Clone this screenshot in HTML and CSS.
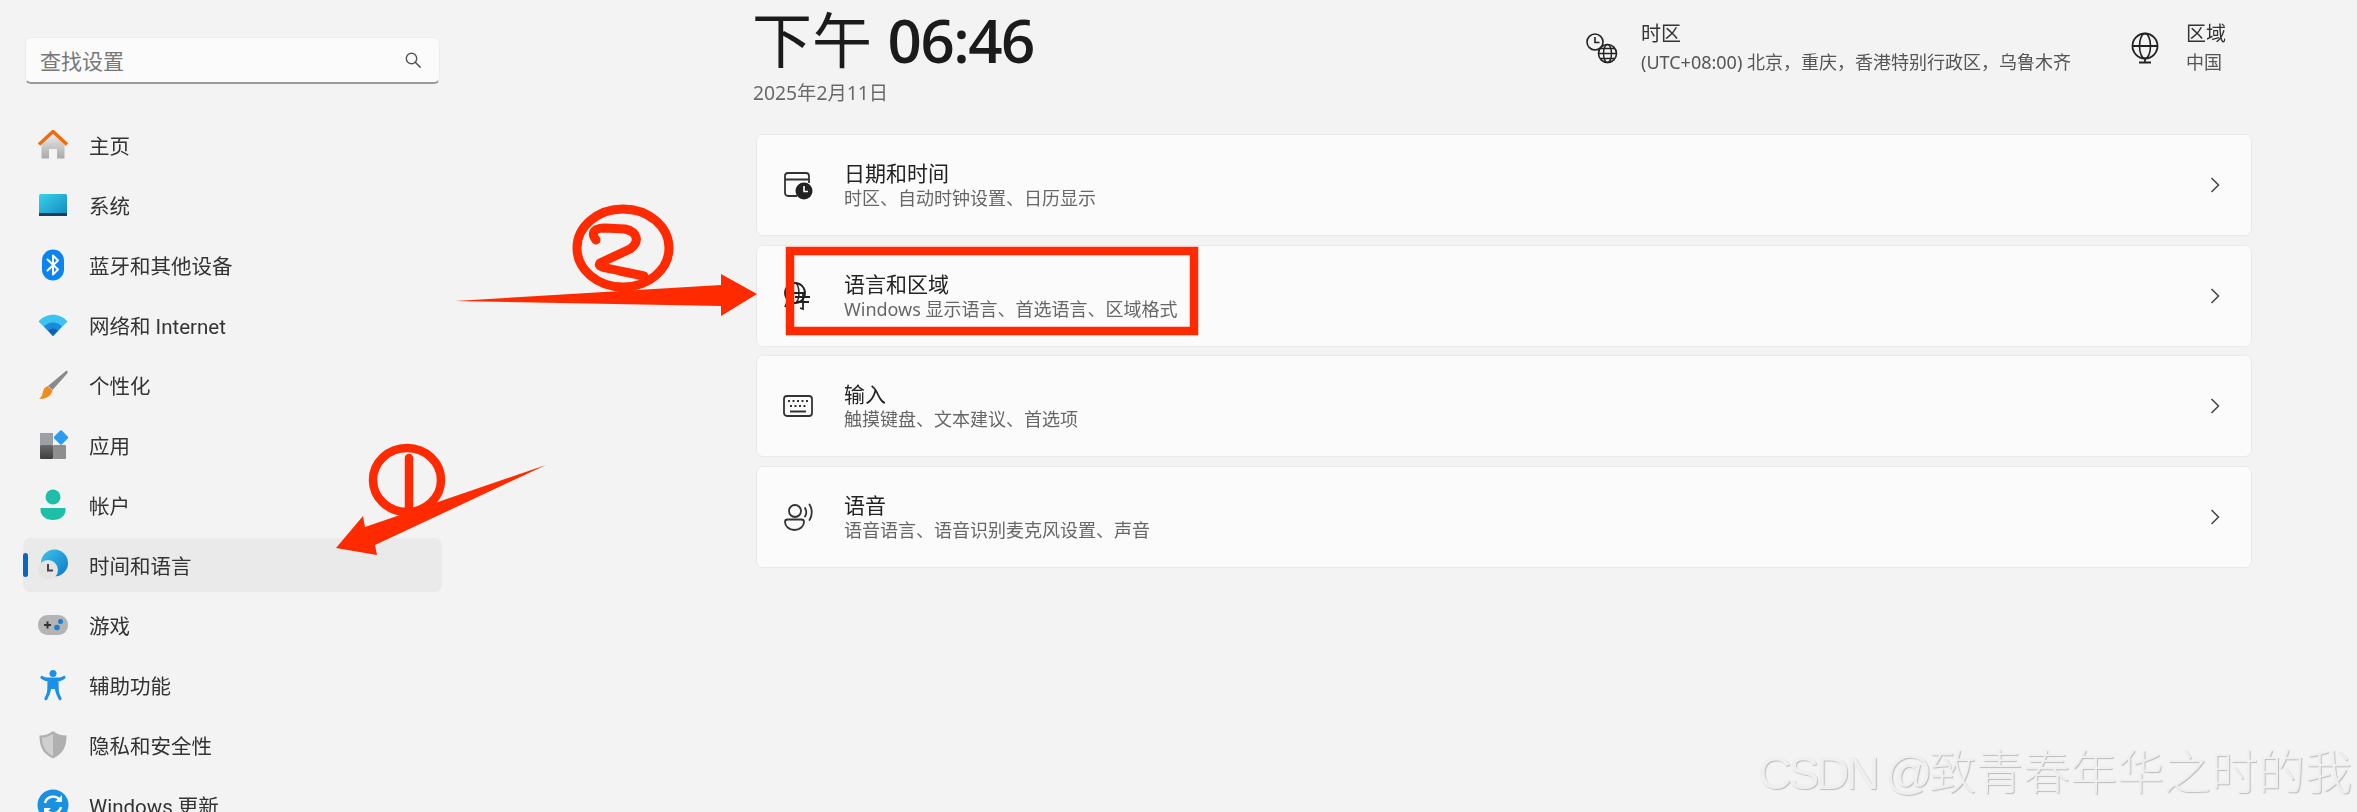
FILE: index.html
```html
<!DOCTYPE html>
<html lang="zh-CN">
<head>
<meta charset="utf-8">
<title>时间和语言</title>
<link rel="stylesheet" href="styles.css">
</head>
<body>
<div class="app">
  <aside class="sidebar">
    <div class="search"><span class="search-text">查找设置</span>
      <svg class="search-icon" viewBox="0 0 18 18"><circle cx="7.5" cy="7.5" r="5.2" fill="none" stroke="#555" stroke-width="1.4"/><path d="M11.5 11.5l4.6 4.6" stroke="#555" stroke-width="1.5" stroke-linecap="round"/></svg>
    </div>
    <nav class="nav">
      <a class="nav-item"><svg class="nav-icon" viewBox="0 0 32 32"><defs><linearGradient id="hb" x1="0" y1="0" x2="0" y2="1"><stop offset="0" stop-color="#ececec"/><stop offset="1" stop-color="#a9a9a9"/></linearGradient></defs><path d="M4.500 14L16 4l11.500 10v14.500a1 1 0 0 1-1 1H20V20h-8v9.500H5.500a1 1 0 0 1-1-1z" fill="url(#hb)"/><path d="M2 15.500L16 2.500l14 13" fill="none" stroke="#ee6d0a" stroke-width="3.400" stroke-linejoin="round"/></svg><span>主页</span></a>
      <a class="nav-item"><svg class="nav-icon" viewBox="0 0 32 32"><defs><linearGradient id="sy" x1="0" y1="0" x2="1" y2="1"><stop offset="0" stop-color="#38d3ee"/><stop offset="1" stop-color="#1487bd"/></linearGradient></defs><rect x="2" y="5" width="28" height="22" rx="1.500" fill="url(#sy)"/><rect x="2" y="24" width="28" height="3" fill="#1c3f55"/></svg><span>系统</span></a>
      <a class="nav-item"><svg class="nav-icon" viewBox="0 0 32 32"><rect x="5" y="0.500" width="22" height="31" rx="11" fill="#0a84f0"/><path d="M10.500 10.500l10.500 10-5 5V6.500l5 5-10.500 10" fill="none" stroke="#fff" stroke-width="2" stroke-linejoin="round" stroke-linecap="round"/></svg><span>蓝牙和其他设备</span></a>
      <a class="nav-item"><svg class="nav-icon" viewBox="0 0 32 32"><path d="M1.500 12.500C9 3.500 23 3.500 30.500 12.500L16 27z" fill="#3cc3f0"/><path d="M7 17.500c5-5.500 13-5.500 18 0L16 27z" fill="#1a8bdc"/><path d="M11 21.500c3-2.500 7-2.500 10 0L16 27z" fill="#0f62b0"/></svg><span>网络和 Internet</span></a>
      <a class="nav-item"><svg class="nav-icon" viewBox="0 0 32 32"><path d="M29.500 1.500c1.500 1 1.500 2 .5 3.200L15.500 21 11 17z" fill="#8a8a8a"/><path d="M10.500 17l5 4.500c-1 5-6 8.500-13.500 8.500 3-2.500 3.500-4.500 4-7.500.6-2.800 2.500-4.500 4.500-5.500z" fill="#f28a1e"/></svg><span>个性化</span></a>
      <a class="nav-item"><svg class="nav-icon" viewBox="0 0 32 32"><defs><linearGradient id="ap" x1="0" y1="0" x2="0" y2="1"><stop offset="0" stop-color="#6a6a6a"/><stop offset="1" stop-color="#3e3e3e"/></linearGradient></defs><rect x="3" y="4" width="13" height="12" fill="#9aa0a6"/><rect x="3" y="16" width="13" height="14" rx="1" fill="url(#ap)"/><rect x="16" y="16" width="13" height="14" rx="1" fill="#8e8e8e"/><rect x="18.500" y="3" width="11" height="11" rx="1.500" transform="rotate(45 24 8.500)" fill="#2a9df0"/></svg><span>应用</span></a>
      <a class="nav-item"><svg class="nav-icon" viewBox="0 0 32 32"><circle cx="16" cy="8" r="7.500" fill="#1ebfa8"/><path d="M3.500 19h25v2c0 6-5.500 10-12.500 10S3.500 27 3.500 21z" fill="#1ebfa8"/></svg><span>帐户</span></a>
      <a class="nav-item active"><svg class="nav-icon" viewBox="0 0 32 32"><defs><linearGradient id="gl" x1="0" y1="0" x2="1" y2="1"><stop offset="0" stop-color="#3cc6e8"/><stop offset="1" stop-color="#0d77c8"/></linearGradient></defs><circle cx="17.500" cy="14" r="13.500" fill="url(#gl)"/><circle cx="11" cy="21" r="10" fill="#e4e4e4"/><path d="M11 15v6.500h5" fill="none" stroke="#444" stroke-width="2"/></svg><span>时间和语言</span></a>
      <a class="nav-item"><svg class="nav-icon" viewBox="0 0 32 32"><rect x="1" y="6" width="30" height="20" rx="9.500" fill="#b4b4b4"/><path d="M7 16h7M10.500 12.500v7" stroke="#333" stroke-width="2"/><circle cx="23.500" cy="12.500" r="2.500" fill="#1a7fd4"/><circle cx="20" cy="18.500" r="2.800" fill="#1a7fd4"/></svg><span>游戏</span></a>
      <a class="nav-item"><svg class="nav-icon" viewBox="0 0 32 32"><circle cx="16" cy="4.500" r="3.500" fill="#1a90e8"/><path d="M5 8.500c3 2 7 3 11 3s8-1 11-3M12 11.500c1.500 6 .5 12-3 18M20 11.500c-1.500 6-.5 12 3 18M12 11.500h8v7h-8z" fill="#1a90e8" stroke="#1a90e8" stroke-width="3.200" stroke-linecap="round"/></svg><span>辅助功能</span></a>
      <a class="nav-item"><svg class="nav-icon" viewBox="0 0 32 32"><path d="M16 2c4 3 8 4.500 13.500 4.500 0 11-3 18-13.500 23C5.500 24.500 2.500 17.500 2.500 6.500 8 6.500 12 5 16 2z" fill="#b0b0b0"/><path d="M16 4.500V27C8 23 5 17 5 8.500c4.500 0 8-1.500 11-4z" fill="#cfcfcf"/></svg><span>隐私和安全性</span></a>
      <a class="nav-item"><svg class="nav-icon" viewBox="0 0 32 32"><circle cx="16" cy="16" r="15.500" fill="#1a90e0"/><path d="M8 14a8.500 8.500 0 0 1 15-3M24 18a8.500 8.500 0 0 1-15 3" fill="none" stroke="#fff" stroke-width="2.400"/><path d="M25 6v7h-7zM7 26v-7h7z" fill="#fff"/></svg><span>Windows 更新</span></a>
    </nav>
  </aside>
  <main class="main">
    <header class="head">
      <div class="clock">
        <div class="time"><span class="time-cjk">下午</span> <span class="time-num">06:46</span></div>
        <div class="date">2025年2月11日</div>
      </div>
      <div class="summary summary-tz">
        <svg class="sum-icon" viewBox="0 0 32 32"><circle cx="9" cy="10" r="8" fill="none" stroke="#222" stroke-width="1.600"/><path d="M9 5v5.500h4.500" fill="none" stroke="#222" stroke-width="1.600"/><circle cx="21.500" cy="21.500" r="9" fill="#f3f3f3" stroke="#222" stroke-width="1.600"/><ellipse cx="21.500" cy="21.500" rx="4" ry="9" fill="none" stroke="#222" stroke-width="1.400"/><path d="M12.500 21.500h18M14 16.500h15M14 26.500h15" stroke="#222" stroke-width="1.400"/></svg>
        <div><div class="sum-title">时区</div><div class="sum-sub">(UTC+08:00) 北京，重庆，香港特别行政区，乌鲁木齐</div></div>
      </div>
      <div class="summary summary-rg">
        <svg class="sum-icon" viewBox="0 0 32 32"><circle cx="16" cy="14" r="12.500" fill="none" stroke="#222" stroke-width="1.800"/><ellipse cx="16" cy="14" rx="5.500" ry="12.500" fill="none" stroke="#222" stroke-width="1.600"/><path d="M3.500 14h25M16 26.500v4M10 30.500h12" stroke="#222" stroke-width="1.800"/></svg>
        <div><div class="sum-title">区域</div><div class="sum-sub">中国</div></div>
      </div>
    </header>
    <section class="cards">
      <a class="card"><svg class="card-icon" viewBox="0 0 30 30"><path d="M14 26H5a3 3 0 0 1-3-3V6a3 3 0 0 1 3-3h18a3 3 0 0 1 3 3v7M2 9.500h24" fill="none" stroke="#333" stroke-width="1.800"/><circle cx="21" cy="21" r="8.500" fill="#222"/><path d="M21 16v5.500h4" fill="none" stroke="#fff" stroke-width="1.600"/></svg><div class="card-text"><div class="card-title">日期和时间</div><div class="card-sub">时区、自动时钟设置、日历显示</div></div><svg class="chev" viewBox="0 0 10 16"><path d="M1.500 1l7 7-7 7" fill="none" stroke="#444" stroke-width="1.500"/></svg></a>
      <a class="card"><svg class="card-icon" viewBox="0 0 30 30"><circle cx="12" cy="12" r="10" fill="none" stroke="#222" stroke-width="1.800"/><ellipse cx="12" cy="12" rx="4" ry="10" fill="none" stroke="#222" stroke-width="1.500"/><path d="M2 12h20M2 26l4-9 4 9M12 16h15M20 13v15l-3-1M14 21h12" fill="none" stroke="#222" stroke-width="1.800"/></svg><div class="card-text"><div class="card-title">语言和区域</div><div class="card-sub">Windows 显示语言、首选语言、区域格式</div></div><svg class="chev" viewBox="0 0 10 16"><path d="M1.500 1l7 7-7 7" fill="none" stroke="#444" stroke-width="1.500"/></svg></a>
      <a class="card"><svg class="card-icon" viewBox="0 0 30 30"><rect x="1" y="5" width="28" height="20" rx="3" fill="none" stroke="#333" stroke-width="1.800"/><path d="M5 10h20M7 15h16" stroke="#333" stroke-width="2" stroke-dasharray="2 2.500"/><path d="M7 20.500h16" stroke="#333" stroke-width="2"/></svg><div class="card-text"><div class="card-title">输入</div><div class="card-sub">触摸键盘、文本建议、首选项</div></div><svg class="chev" viewBox="0 0 10 16"><path d="M1.500 1l7 7-7 7" fill="none" stroke="#444" stroke-width="1.500"/></svg></a>
      <a class="card"><svg class="card-icon" viewBox="0 0 30 30"><circle cx="12" cy="9" r="6" fill="none" stroke="#333" stroke-width="1.800"/><path d="M2 20c0-1.500 1-2.500 2.500-2.500h14c1.500 0 2.500 1 2.500 2.500 0 4-4 8-9.500 8S2 24 2 20z" fill="none" stroke="#333" stroke-width="1.800"/><path d="M22 6c1.500 2.500 1.500 6 0 8.500M26.500 2.500c3 4.500 3 11 0 15.500" fill="none" stroke="#333" stroke-width="1.800" stroke-linecap="round"/></svg><div class="card-text"><div class="card-title">语音</div><div class="card-sub">语音语言、语音识别麦克风设置、声音</div></div><svg class="chev" viewBox="0 0 10 16"><path d="M1.500 1l7 7-7 7" fill="none" stroke="#444" stroke-width="1.500"/></svg></a>
    </section>
  </main>
</div>
<svg class="marks" viewBox="0 0 2357 812">
  <g fill="none" stroke="#ff2a00">
    <rect x="790" y="251" width="404" height="80" stroke-width="8.500"/>
    <ellipse cx="623" cy="248" rx="46" ry="39" stroke-width="9"/>
    <path d="M596 240C590 232 595 228 605 228L625 229C638 232 640 242 630 249L600 263C596 268 610 268 620 271L644 276" stroke-width="9" stroke-linejoin="round" stroke-linecap="round"/>
    <ellipse cx="407" cy="480" rx="34" ry="32" stroke-width="8.500"/>
    <path d="M409 458v52" stroke-width="8.500" stroke-linecap="round"/>
  </g>
  <path d="M455 301L721 285V274L757 294L721 316V306z" fill="#ff2a00"/>
  <path d="M546 465L365 527L363 516L336 548L377 555L375 545z" fill="#ff2a00"/>
</svg>
<div class="watermark"><span class="wm-latin">CSDN @</span>致青春年华之时的我</div>
</body>
</html>
```

FILE: styles.css
```css
html, body {
  margin: 0;
  height: 812px;
  overflow: hidden;
  background: #f3f3f3;
}
body {
  font-family: "Noto Sans", "Noto Sans CJK SC", sans-serif;
  color: #222;
  position: relative;
}
.app {
  display: flex;
  height: 812px;
  overflow: hidden;
  filter: blur(0.55px);
}
.sidebar {
  width: 419px;
  flex: none;
  padding: 37px 0 0 23px;
}
.search {
  height: 44px;
  margin: 0 2px;
  background: #fbfbfb;
  border-radius: 6px;
  border: 1px solid #ececec;
  border-bottom: 2px solid #9a9a9a;
  display: flex;
  align-items: center;
  justify-content: space-between;
  padding: 0 17px 0 14px;
}
.search-text {
  font-size: 21px;
  color: #777;
}
.search-icon {
  width: 18px;
  height: 18px;
}
.nav {
  margin-top: 34px;
  display: flex;
  flex-direction: column;
  gap: 6px;
}
.nav-item {
  height: 54px;
  flex: none;
  display: flex;
  align-items: center;
  gap: 20px;
  padding-left: 14px;
  border-radius: 7px;
  font-family: Roboto, "Noto Sans CJK SC", sans-serif;
  font-size: 20.500px;
  color: #333;
  position: relative;
}
.nav-item.active {
  background: #eaeaea;
}
.nav-item.active::before {
  content: "";
  position: absolute;
  left: 0;
  top: 15px;
  width: 5px;
  height: 24px;
  border-radius: 3px;
  background: #0a67c0;
}
.nav-icon {
  width: 32px;
  height: 32px;
  flex: none;
}
.main {
  flex: 1;
  margin: 0 105px 0 314px;
  min-width: 0;
}
.head {
  height: 134px;
  display: flex;
  align-items: flex-start;
  padding-right: 26px;
}
.clock {
  margin-left: -4px;
}
.time {
  font-size: 60px;
  line-height: 80px;
  color: #1b1b1b;
  white-space: nowrap;
}
.time-cjk {
  font-weight: 400;
}
.time-num {
  font-family: "Open Sans", sans-serif;
  font-weight: 600;
  letter-spacing: -1.500px;
}
.date {
  font-size: 19.300px;
  line-height: 26px;
  color: #6a6a6a;
  margin-left: 1px;
}
.summary {
  display: flex;
  align-items: center;
  gap: 23px;
  padding-top: 20px;
}
.summary-tz {
  margin-left: auto;
}
.summary-rg {
  margin-left: 58px;
  gap: 25px;
}
.sum-icon {
  width: 32px;
  height: 32px;
  flex: none;
}
.sum-title {
  font-size: 20px;
  line-height: 28px;
  color: #333;
}
.sum-sub {
  font-size: 18px;
  line-height: 28px;
  color: #555;
  white-space: nowrap;
}
.cards {
  display: flex;
  flex-direction: column;
  gap: 8.500px;
}
.card {
  height: 100px;
  background: #fbfbfb;
  border: 1px solid #e9e9e9;
  border-radius: 7px;
  display: flex;
  align-items: center;
  padding: 0 31px 0 26px;
}
.card-icon {
  width: 30px;
  height: 30px;
  flex: none;
  margin-right: 31px;
}
.card-text {
  flex: 1;
  margin-top: 1px;
}
.card-title {
  font-size: 21px;
  line-height: 26px;
  color: #222;
}
.card-sub {
  font-size: 18px;
  line-height: 25px;
  color: #666;
}
.chev {
  width: 10px;
  height: 16px;
  flex: none;
}
.marks {
  position: absolute;
  left: 0;
  top: 0;
  width: 2357px;
  height: 812px;
}
.watermark {
  position: absolute;
  right: 5px;
  top: 743px;
  font-family: "Liberation Sans", "Noto Sans CJK SC", sans-serif;
  font-size: 47px;
  font-weight: 300;
  line-height: 60px;
  white-space: nowrap;
  color: #efefef;
  text-shadow: 1px 1px 1px #bdbdbd;
}
.wm-latin {
  letter-spacing: -3.800px;
}
```
